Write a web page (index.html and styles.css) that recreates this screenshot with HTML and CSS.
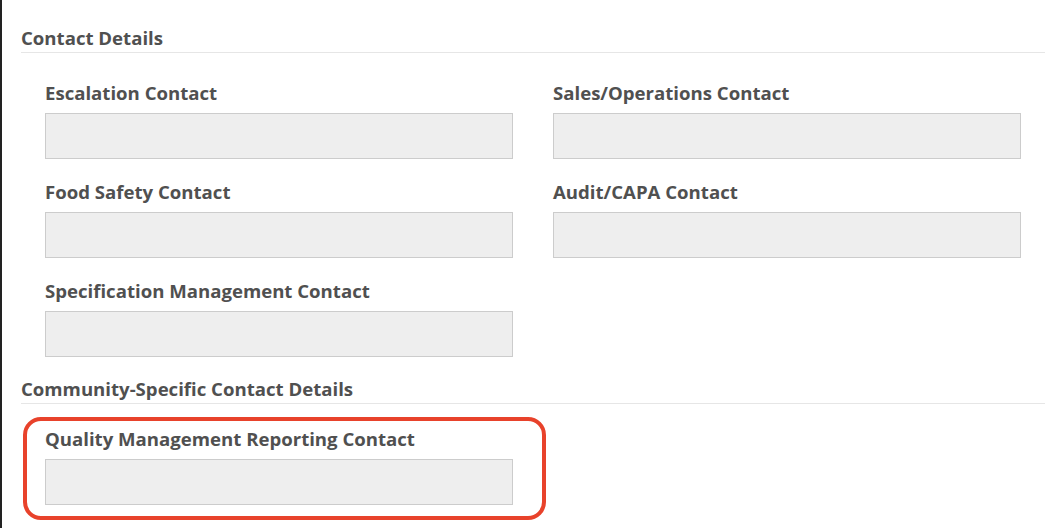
FILE: index.html
```html
<!DOCTYPE html>
<html lang="en">
<head>
    <meta charset="UTF-8">
    <title>Contact Details</title>
    <link rel="stylesheet" href="styles.css">
</head>
<body>
    <div class="page">
        <h2 class="section-title">Contact Details</h2>

        <div class="fields">
            <div class="field">
                <label for="escalation">Escalation Contact</label>
                <input id="escalation" type="text" disabled>
            </div>
            <div class="field">
                <label for="sales">Sales/Operations Contact</label>
                <input id="sales" type="text" disabled>
            </div>
            <div class="field">
                <label for="food-safety">Food Safety Contact</label>
                <input id="food-safety" type="text" disabled>
            </div>
            <div class="field">
                <label for="audit">Audit/CAPA Contact</label>
                <input id="audit" type="text" disabled>
            </div>
            <div class="field">
                <label for="spec">Specification Management Contact</label>
                <input id="spec" type="text" disabled>
            </div>
        </div>

        <h2 class="section-title community">Community-Specific Contact Details</h2>

        <div class="highlight">
            <div class="field">
                <label for="quality">Quality Management Reporting Contact</label>
                <input id="quality" type="text" disabled>
            </div>
        </div>
    </div>
</body>
</html>
```

FILE: styles.css
```css
body {
    font-family: 'Open Sans', 'Liberation Sans', sans-serif;
    background: white;
    margin: 0;
    padding: 0;
}

.page {
    height: 528px;
    box-sizing: border-box;
    border-left: 2px solid #222;
    padding: 26px 15px 0 19px;
}

.section-title {
    margin: 0;
    padding-bottom: 2px;
    font-size: 18.6px;
    line-height: 24px;
    font-weight: 700;
    color: #505050;
    border-bottom: 1px solid #e6e6e6;
}

.section-title.community {
    margin-top: 20px;
}

.fields {
    display: grid;
    grid-template-columns: 468px 468px;
    column-gap: 40px;
    row-gap: 21px;
    margin-top: 28px;
    padding-left: 24px;
}

.field label {
    display: block;
    font-size: 18.6px;
    line-height: 24px;
    font-weight: 700;
    color: #505050;
    margin-bottom: 8px;
}

.field input {
    display: block;
    width: 468px;
    height: 46px;
    box-sizing: border-box;
    margin: 0;
    background: #eeeeee;
    border: 1px solid #cccccc;
    border-radius: 0;
}

.highlight {
    width: 523px;
    box-sizing: border-box;
    margin: 13px 0 0 2px;
    padding: 6px 29px 11px 18px;
    border: 4px solid #e8422b;
    border-radius: 18px;
}
```
